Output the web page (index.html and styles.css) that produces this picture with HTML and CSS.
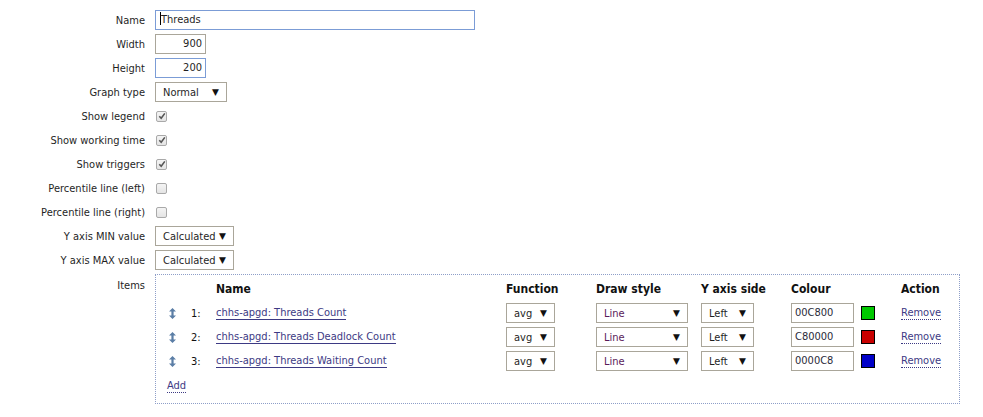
FILE: index.html
```html
<!DOCTYPE html>
<html>
<head>
<meta charset="utf-8">
<link rel="stylesheet" href="styles.css">
</head>
<body>
<ul class="form">
  <li class="row"><div class="lbl">Name</div><div class="fld"><div class="input input-name focus"><span class="caret"></span>Threads</div></div></li>
  <li class="row"><div class="lbl">Width</div><div class="fld"><div class="input input-num">900</div></div></li>
  <li class="row"><div class="lbl">Height</div><div class="fld"><div class="input input-num focus">200</div></div></li>
  <li class="row"><div class="lbl">Graph type</div><div class="fld"><div class="select sel-type"><span>Normal</span><i class="arrow">▼</i></div></div></li>
  <li class="row"><div class="lbl">Show legend</div><div class="fld"><span class="cb checked"><svg viewBox="0 0 10 10" width="10" height="10"><path d="M2.3 5.3 L4.2 7.3 L7.8 2.4" fill="none" stroke="#555" stroke-width="1.6"/></svg></span></div></li>
  <li class="row"><div class="lbl">Show working time</div><div class="fld"><span class="cb checked"><svg viewBox="0 0 10 10" width="10" height="10"><path d="M2.3 5.3 L4.2 7.3 L7.8 2.4" fill="none" stroke="#555" stroke-width="1.6"/></svg></span></div></li>
  <li class="row"><div class="lbl">Show triggers</div><div class="fld"><span class="cb checked"><svg viewBox="0 0 10 10" width="10" height="10"><path d="M2.3 5.3 L4.2 7.3 L7.8 2.4" fill="none" stroke="#555" stroke-width="1.6"/></svg></span></div></li>
  <li class="row"><div class="lbl">Percentile line (left)</div><div class="fld"><span class="cb"></span></div></li>
  <li class="row"><div class="lbl">Percentile line (right)</div><div class="fld"><span class="cb"></span></div></li>
  <li class="row"><div class="lbl">Y axis MIN value</div><div class="fld"><div class="select sel-axis"><span>Calculated</span><i class="arrow">▼</i></div></div></li>
  <li class="row"><div class="lbl">Y axis MAX value</div><div class="fld"><div class="select sel-axis"><span>Calculated</span><i class="arrow">▼</i></div></div></li>
  <li class="row row-items"><div class="lbl lbl-items">Items</div>
    <div class="fld">
      <div class="items-box">
        <div class="items-grid">
          <div class="th"></div><div class="th"></div>
          <div class="th">Name</div><div class="th">Function</div><div class="th">Draw style</div><div class="th">Y axis side</div><div class="th">Colour</div><div class="th">Action</div>

          <div class="td drag"><svg viewBox="0 0 7 11" width="7" height="11"><path d="M3.5 0 L7 3.5 L4.6 3.5 L4.6 7.5 L7 7.5 L3.5 11 L0 7.5 L2.4 7.5 L2.4 3.5 L0 3.5 Z" fill="#5b7ea6"/></svg></div>
          <div class="td num">1:</div>
          <div class="td"><a class="link" href="#">chhs-apgd: Threads Count</a></div>
          <div class="td"><div class="select sel-fn"><span>avg</span><i class="arrow">▼</i></div></div>
          <div class="td"><div class="select sel-draw"><span class="purple">Line</span><i class="arrow">▼</i></div></div>
          <div class="td"><div class="select sel-side"><span>Left</span><i class="arrow">▼</i></div></div>
          <div class="td colour"><div class="input input-colour">00C800</div><span class="swatch" style="background:#00c800"></span></div>
          <div class="td"><a class="remove" href="#">Remove</a></div>

          <div class="td drag"><svg viewBox="0 0 7 11" width="7" height="11"><path d="M3.5 0 L7 3.5 L4.6 3.5 L4.6 7.5 L7 7.5 L3.5 11 L0 7.5 L2.4 7.5 L2.4 3.5 L0 3.5 Z" fill="#5b7ea6"/></svg></div>
          <div class="td num">2:</div>
          <div class="td"><a class="link" href="#">chhs-apgd: Threads Deadlock Count</a></div>
          <div class="td"><div class="select sel-fn"><span>avg</span><i class="arrow">▼</i></div></div>
          <div class="td"><div class="select sel-draw"><span class="purple">Line</span><i class="arrow">▼</i></div></div>
          <div class="td"><div class="select sel-side"><span>Left</span><i class="arrow">▼</i></div></div>
          <div class="td colour"><div class="input input-colour">C80000</div><span class="swatch" style="background:#c80000"></span></div>
          <div class="td"><a class="remove" href="#">Remove</a></div>

          <div class="td drag"><svg viewBox="0 0 7 11" width="7" height="11"><path d="M3.5 0 L7 3.5 L4.6 3.5 L4.6 7.5 L7 7.5 L3.5 11 L0 7.5 L2.4 7.5 L2.4 3.5 L0 3.5 Z" fill="#5b7ea6"/></svg></div>
          <div class="td num">3:</div>
          <div class="td"><a class="link" href="#">chhs-apgd: Threads Waiting Count</a></div>
          <div class="td"><div class="select sel-fn"><span>avg</span><i class="arrow">▼</i></div></div>
          <div class="td"><div class="select sel-draw"><span class="purple">Line</span><i class="arrow">▼</i></div></div>
          <div class="td"><div class="select sel-side"><span>Left</span><i class="arrow">▼</i></div></div>
          <div class="td colour"><div class="input input-colour">0000C8</div><span class="swatch" style="background:#0000c8"></span></div>
          <div class="td"><a class="remove" href="#">Remove</a></div>
        </div>
        <div class="add-row"><a class="remove" href="#">Add</a></div>
      </div>
    </div>
  </li>
</ul>
</body>
</html>
```

FILE: styles.css
```css
html, body {
  margin: 0;
  padding: 0;
  background: #ffffff;
}
body {
  padding: 8px;
  font-family: "DejaVu Sans Condensed", "DejaVu Sans", sans-serif;
  font-size: 11px;
  color: #1f1f1f;
}
.form {
  list-style: none;
  margin: 0;
  padding: 0;
}
.row {
  display: grid;
  grid-template-columns: 137px 1fr;
  column-gap: 10px;
  align-items: center;
  min-height: 20px;
  padding: 2px 0;
}
.lbl {
  text-align: right;
  white-space: nowrap;
  padding-top: 1px;
}
.fld {
  display: flex;
  align-items: center;
  min-height: 20px;
}
.row-items {
  align-items: start;
}
.lbl-items {
  padding-top: 5px;
}
.input {
  box-sizing: border-box;
  height: 20px;
  border: 1px solid #aaa69a;
  background: #fff;
  padding: 0 5px;
  line-height: 18px;
  color: #1f1f1f;
  white-space: nowrap;
}
.input.focus {
  border-color: #7b9cd6;
}
.input-name {
  width: 320px;
  padding-left: 4px;
}
.caret {
  display: inline-block;
  width: 1px;
  height: 13px;
  background: #000;
  vertical-align: -2px;
}
.input-num {
  width: 51px;
  text-align: right;
  padding-right: 3px;
}
.input-colour {
  width: 63px;
  padding-left: 3px;
  color: #2a2a3a;
}
.select {
  box-sizing: border-box;
  height: 20px;
  border: 1px solid #aaa69a;
  background: #fff;
  display: flex;
  align-items: center;
  justify-content: space-between;
  padding: 0 7px 0 7px;
  white-space: nowrap;
}
.arrow {
  font-style: normal;
  font-size: 9px;
  color: #111;
  font-family: "DejaVu Sans", sans-serif;
}
.sel-type { width: 72px; }
.sel-axis { width: 79px; }
.sel-fn { width: 49px; }
.sel-draw { width: 92px; }
.sel-side { width: 53px; }
.purple { color: #5a1a5a; }
.cb {
  box-sizing: border-box;
  display: inline-block;
  width: 11px;
  height: 11px;
  border: 1px solid #a9a9a9;
  border-radius: 2px;
  background: linear-gradient(#f4f4f4, #e4e4e4);
  margin-left: 1px;
  position: relative;
}
.cb svg {
  position: absolute;
  left: -0.5px;
  top: -0.5px;
}
.items-box {
  box-sizing: border-box;
  width: 805px;
  height: 130px;
  border: 1px dotted #8e9ec8;
  padding: 2px 5px 0 5px;
}
.items-grid {
  display: grid;
  grid-template-columns: 25px 25px 290px 90px 105px 90px 110px 60px;
  grid-auto-rows: 24px;
  align-items: center;
}
.th {
  font-weight: bold;
  font-size: 12px;
  color: #111;
  padding-left: 5px;
  height: 20px;
  line-height: 20px;
}
.td {
  padding-left: 5px;
  display: flex;
  align-items: center;
}
.drag {
  padding-left: 8px;
}
.num {
  color: #111;
}
.link {
  color: #3d3a84;
  text-decoration: none;
  border-bottom: 1px solid #3d3a84;
  line-height: 12px;
  white-space: nowrap;
}
.remove {
  color: #3d3a84;
  text-decoration: none;
  border-bottom: 1px dotted #3d3a84;
  line-height: 12px;
}
.colour {
  gap: 7px;
}
.swatch {
  box-sizing: border-box;
  display: inline-block;
  width: 14px;
  height: 14px;
  border: 1px solid #000;
}
.add-row {
  padding: 6px 0 0 6px;
}
```
